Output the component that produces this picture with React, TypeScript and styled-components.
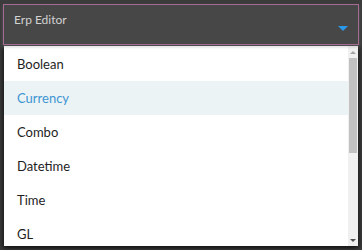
import styled, { createGlobalStyle } from "styled-components"

const GlobalStyle = createGlobalStyle`
  html, body {
    margin: 0;
    padding: 0;
    background: #3c3c3c;
    font-family: Lato, "Open Sans", sans-serif;
  }
`

const options = ["Boolean", "Currency", "Combo", "Datetime", "Time", "GL"]

export default function App() {
  return (
    <>
      <GlobalStyle />
      <Wrapper>
        <Field>
          <Label>Erp Editor</Label>
          <Caret />
        </Field>
        <Menu>
          <OptionList>
            {options.map((o) => (
              <Option key={o} $active={o === "Currency"}>
                {o}
              </Option>
            ))}
          </OptionList>
          <ScrollBar>
            <ArrowUp />
            <Thumb />
            <Track />
            <ArrowDown />
          </ScrollBar>
        </Menu>
      </Wrapper>
    </>
  )
}

const Wrapper = styled.div`
  width: 362px;
  height: 250px;
  box-sizing: border-box;
  padding: 4px 3px 0 3px;
  overflow: hidden;
`
const Field = styled.div`
  position: relative;
  height: 41px;
  box-sizing: border-box;
  border: 1px solid #a46c92;
  background: #474747;
  padding: 8px 10px 0 10px;
  box-shadow: 0 2px 3px rgba(140, 140, 140, 0.35);
`
const Label = styled.div`
  color: #d2d2d2;
  font-size: 12px;
  line-height: 14px;
`
const Caret = styled.div`
  position: absolute;
  right: 10px;
  top: 21px;
  width: 0;
  height: 0;
  border-left: 5px solid transparent;
  border-right: 5px solid transparent;
  border-top: 5px solid #2b98e8;
`
const Menu = styled.div`
  display: flex;
  margin: 1px 0 0 1px;
  width: 354px;
  height: 200px;
  background: #fff;
  box-shadow: -2px 2px 4px rgba(0, 0, 0, 0.5), 2px 2px 4px rgba(0, 0, 0, 0.4);
`
const OptionList = styled.div`
  flex: 1;
  padding-top: 1px;
  overflow: hidden;
`
const Option = styled.div<{ $active?: boolean }>`
  height: 34px;
  display: flex;
  align-items: center;
  padding-left: 13px;
  font-size: 13px;
  color: ${(p) => (p.$active ? "#3b95d3" : "#1e1e1e")};
  background: ${(p) => (p.$active ? "#ecf3f5" : "#fff")};
`
const ScrollBar = styled.div`
  width: 10px;
  display: flex;
  flex-direction: column;
  align-items: center;
  background: #f0f0f0;
  padding: 5px 0 4px;
  box-sizing: border-box;
`
const ArrowUp = styled.div`
  width: 0;
  height: 0;
  border-left: 3px solid transparent;
  border-right: 3px solid transparent;
  border-bottom: 3px solid #a3a3a3;
  margin-bottom: 4px;
`
const Thumb = styled.div`
  width: 8px;
  height: 95px;
  background: #c1c1c1;
`
const Track = styled.div`
  flex: 1;
`
const ArrowDown = styled.div`
  width: 0;
  height: 0;
  border-left: 3px solid transparent;
  border-right: 3px solid transparent;
  border-top: 3px solid #505050;
`
